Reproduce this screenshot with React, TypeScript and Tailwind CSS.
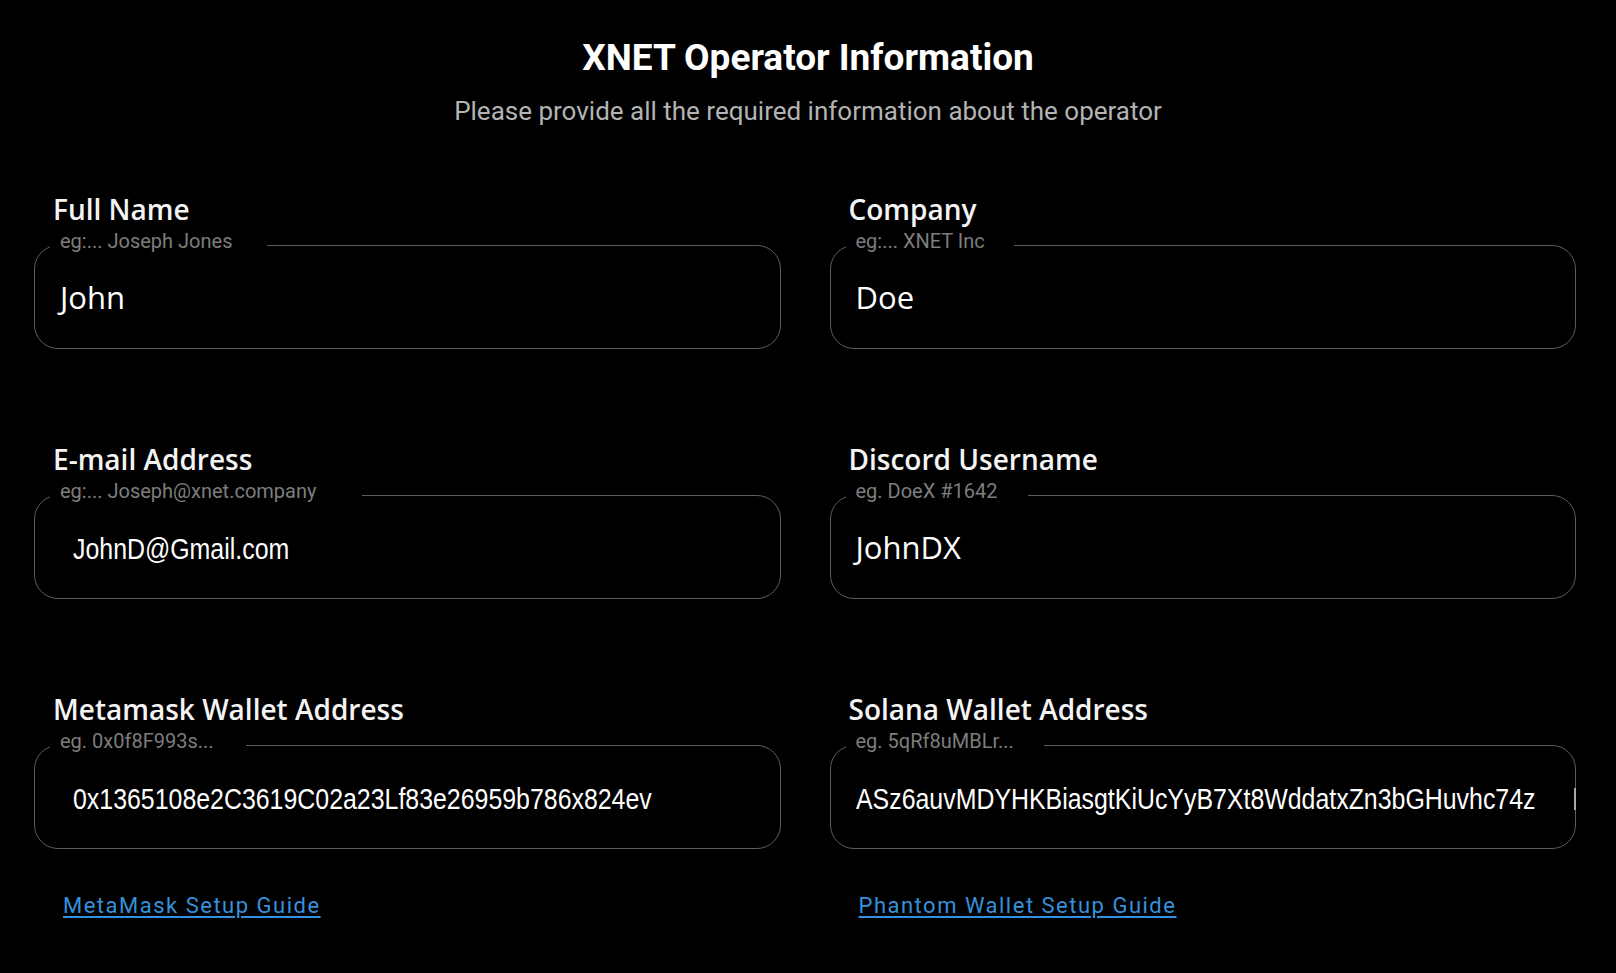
import React from 'react';

// Operator info form — static mock of the filled-in state

type Field = {
  label: string;
  hint: string;
  value: string;
  narrow?: boolean;
  inset: string; // left padding of the value inside the box
  notch: string; // width of the gap cut in the top border
  overflow?: boolean;
};

const fields: Field[] = [
  { label: 'Full Name', hint: 'eg:... Joseph Jones', value: 'John', inset: 'pl-[10px]', notch: 'w-[217px]' },
  { label: 'Company', hint: 'eg:... XNET Inc', value: 'Doe', inset: 'pl-[10px]', notch: 'w-[168px]' },
  { label: 'E-mail Address', hint: 'eg:... Joseph@xnet.company', value: 'JohnD@Gmail.com', narrow: true, inset: 'pl-[23px]', notch: 'w-[312px]' },
  { label: 'Discord Username', hint: 'eg. DoeX #1642', value: 'JohnDX', inset: 'pl-[10px]', notch: 'w-[182px]' },
  { label: 'Metamask Wallet Address', hint: 'eg. 0x0f8F993s...', value: '0x1365108e2C3619C02a23Lf83e26959b786x824ev', narrow: true, inset: 'pl-[23px]', notch: 'w-[196px]' },
  { label: 'Solana Wallet Address', hint: 'eg. 5qRf8uMBLr...', value: 'ASz6auvMDYHKBiasgtKiUcYyB7Xt8WddatxZn3bGHuvhc74z', narrow: true, inset: 'pl-[10px]', notch: 'w-[198px]', overflow: true },
];

const guides = ['MetaMask Setup Guide', 'Phantom Wallet Setup Guide'];

function FormField({ field }: { field: Field }) {
  return (
    <div className="flex flex-col">
      <label
        className="ml-[19px] text-[28px] leading-[36px] font-semibold text-[#f4f4f4]"
        style={{ fontFamily: "'Open Sans', 'Noto Sans', sans-serif" }}
      >
        {field.label}
      </label>
      <fieldset className="relative mt-[4px] rounded-[24px] border border-[#5c5c5c] pl-[15px] pr-[15px] min-w-0">
        <legend
          className={`${field.notch} pl-[10px] pb-[8px] text-[20px] leading-[20px] text-[#7d7d7d] whitespace-nowrap`}
          style={{ fontFamily: "Roboto, 'Liberation Sans', sans-serif" }}
        >
          {field.hint}
        </legend>
        <div className={`flex h-[89px] items-center overflow-hidden ${field.narrow ? 'pb-[9px]' : 'pb-[13px]'} ${field.inset}`}>
          {field.narrow ? (
            <span
              className="inline-block origin-left scale-x-[0.83] text-[30px] leading-[36px] text-white whitespace-nowrap"
              style={{ fontFamily: "'Liberation Sans', Arial, sans-serif" }}
            >
              {field.value}
            </span>
          ) : (
            <span
              className="text-[31px] leading-[36px] text-white"
              style={{ fontFamily: "'Open Sans', 'Noto Sans', sans-serif" }}
            >
              {field.value}
            </span>
          )}
        </div>
        {field.overflow && (
          <div className="absolute right-[-1px] top-[29px] h-[22px] w-[2px] bg-[#a8a8a8]" />
        )}
      </fieldset>
    </div>
  );
}

export default function App() {
  return (
    <div className="min-h-screen bg-black pb-10">
      {/* Header */}
      <div className="pt-[36px] text-center" style={{ fontFamily: "Roboto, 'Liberation Sans', sans-serif" }}>
        <h1 className="text-[37px] leading-[44px] font-bold text-white">XNET Operator Information</h1>
        <p className="mt-[16px] text-[26px] leading-[30px] text-[#b3b3b3]">
          Please provide all the required information about the operator
        </p>
      </div>

      {/* Fields */}
      <div className="mt-[65px] grid grid-cols-2 gap-x-[49px] gap-y-[92px] pl-[34px] pr-[40px]">
        {fields.map(f => (
          <FormField key={f.label} field={f} />
        ))}
      </div>

      {/* Guides */}
      <div className="mt-[44px] grid grid-cols-2 gap-x-[49px] pl-[34px] pr-[40px]">
        {guides.map(g => (
          <a
            key={g}
            href="#"
            className="ml-[29px] w-fit text-[22px] leading-[26px] tracking-[1.5px] text-[#3591dd] underline underline-offset-[3px]"
            style={{ fontFamily: "Roboto, 'Liberation Sans', sans-serif" }}
          >
            {g}
          </a>
        ))}
      </div>
    </div>
  );
}
